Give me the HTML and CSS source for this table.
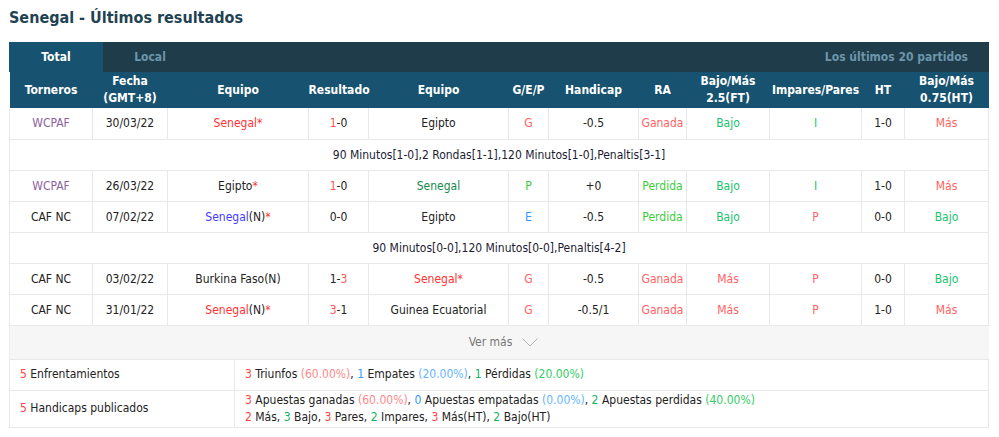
FILE: index.html
```html
<!DOCTYPE html>
<html lang="es">
<head>
<meta charset="utf-8">
<title>Senegal - Últimos resultados</title>
<link rel="stylesheet" href="styles.css">
</head>
<body>
<div class="wrap">
  <h2 class="title">Senegal - Últimos resultados</h2>
  <div class="tabs">
    <div class="tab tab-on">Total</div>
    <div class="tab">Local</div>
    <div class="tab-right">Los últimos 20 partidos</div>
  </div>
  <table class="res">
    <colgroup>
      <col style="width:83px"><col style="width:75px"><col style="width:141px"><col style="width:60px">
      <col style="width:140px"><col style="width:40px"><col style="width:90px"><col style="width:48px">
      <col style="width:83px"><col style="width:92px"><col style="width:43px"><col style="width:84px">
    </colgroup>
    <thead>
      <tr>
        <th>Torneros</th><th>Fecha<br>(GMT+8)</th><th>Equipo</th><th>Resultado</th><th>Equipo</th><th>G/E/P</th><th>Handicap</th><th>RA</th><th>Bajo/Más<br>2.5(FT)</th><th>Impares/Pares</th><th>HT</th><th>Bajo/Más<br>0.75(HT)</th>
      </tr>
    </thead>
    <tbody>
      <tr>
        <td class="lg">WCPAF</td><td>30/03/22</td><td><span class="red">Senegal</span><span class="red">*</span></td><td><span class="sred">1</span>-0</td><td>Egipto</td><td class="salmon">G</td><td>-0.5</td><td class="salmon">Ganada</td><td class="green">Bajo</td><td class="green">I</td><td>1-0</td><td class="salmon">Más</td>
      </tr>
      <tr class="note"><td colspan="12">90 Minutos[1-0],2 Rondas[1-1],120 Minutos[1-0],Penaltis[3-1]</td></tr>
      <tr>
        <td class="lg">WCPAF</td><td>26/03/22</td><td>Egipto<span class="red">*</span></td><td><span class="sred">1</span>-0</td><td class="dgreen">Senegal</td><td class="lgreen">P</td><td>+0</td><td class="lgreen">Perdida</td><td class="green">Bajo</td><td class="green">I</td><td>1-0</td><td class="salmon">Más</td>
      </tr>
      <tr>
        <td>CAF NC</td><td>07/02/22</td><td><span class="blue">Senegal</span>(N)<span class="red">*</span></td><td>0-0</td><td>Egipto</td><td class="sky">E</td><td>-0.5</td><td class="lgreen">Perdida</td><td class="green">Bajo</td><td class="salmon">P</td><td>0-0</td><td class="green">Bajo</td>
      </tr>
      <tr class="note"><td colspan="12">90 Minutos[0-0],120 Minutos[0-0],Penaltis[4-2]</td></tr>
      <tr>
        <td>CAF NC</td><td>03/02/22</td><td>Burkina Faso(N)</td><td>1-<span class="sred">3</span></td><td><span class="red">Senegal*</span></td><td class="salmon">G</td><td>-0.5</td><td class="salmon">Ganada</td><td class="salmon">Más</td><td class="salmon">P</td><td>0-0</td><td class="green">Bajo</td>
      </tr>
      <tr>
        <td>CAF NC</td><td>31/01/22</td><td><span class="red">Senegal</span>(N)<span class="red">*</span></td><td><span class="sred">3</span>-1</td><td>Guinea Ecuatorial</td><td class="salmon">G</td><td>-0.5/1</td><td class="salmon">Ganada</td><td class="salmon">Más</td><td class="salmon">P</td><td>1-0</td><td class="salmon">Más</td>
      </tr>
    </tbody>
  </table>
  <div class="more">Ver más
    <svg class="chev" width="16" height="9" viewBox="0 0 16 9"><path d="M0.5 0.5 L8 8 L15.5 0.5" fill="none" stroke="#b4b4b4" stroke-width="1"/></svg>
  </div>
  <table class="sum">
    <tr>
      <td class="sum-l"><span class="n-red">5</span> Enfrentamientos</td>
      <td><span class="n-red">3</span> Triunfos <span class="p-red">(60.00%)</span>, <span class="n-blue">1</span> Empates <span class="p-blue">(20.00%)</span>, <span class="n-green">1</span> Pérdidas <span class="p-green">(20.00%)</span></td>
    </tr>
    <tr class="sum-2">
      <td class="sum-l"><span class="n-red">5</span> Handicaps publicados</td>
      <td><span class="n-red">3</span> Apuestas ganadas <span class="p-red">(60.00%)</span>, <span class="n-blue">0</span> Apuestas empatadas <span class="p-blue">(0.00%)</span>, <span class="n-green">2</span> Apuestas perdidas <span class="p-green">(40.00%)</span><br><span class="n-red">2</span> Más, <span class="n-green">3</span> Bajo, <span class="n-red">3</span> Pares, <span class="n-green">2</span> Impares, <span class="n-red">3</span> Más(HT), <span class="n-green">2</span> Bajo(HT)</td>
    </tr>
  </table>
</div>
</body>
</html>
```

FILE: styles.css
```css
* { box-sizing: border-box; }
html, body { margin: 0; padding: 0; background: #fff; }
body {
  font-family: "DejaVu Sans Condensed", "Liberation Sans", Arial, sans-serif;
  font-size: 12px;
  color: #222;
}
.wrap { padding: 0 10px 0 9px; width: 999px; }
.title {
  margin: 0;
  padding-top: 6px;
  height: 42px;
  font-size: 16px;
  font-weight: bold;
  color: #1f4353;
  line-height: 24px;
}
.tabs {
  display: flex;
  align-items: center;
  height: 30px;
  background: #1e3c4a;
  width: 980px;
}
.tab {
  width: 94px;
  height: 30px;
  line-height: 30px;
  text-align: center;
  font-weight: bold;
  color: #6d95ab;
}
.tab-on { background: #175370; color: #fff; }
.tab-right {
  margin-left: auto;
  padding-right: 21px;
  font-weight: bold;
  color: #6d95ab;
}
.res {
  width: 980px;
  border-collapse: collapse;
  table-layout: fixed;
}
.res th {
  background: #175370;
  color: #fff;
  font-weight: bold;
  height: 36px;
  line-height: 17px;
  padding: 0;
  text-align: center;
  white-space: nowrap;
}
.res td {
  height: 31px;
  padding: 0;
  text-align: center;
  border: 1px solid #e8e8e8;
  white-space: nowrap;
}
.res tbody tr:first-child td { border-top: 0; height: 31px; }
.res .note td { color: #1c1c34; }
.lg { color: #8e5fa0; }
.red { color: #ff3333; }
.sred { color: #ff5555; }
.salmon { color: #ff6262; }
.green { color: #17c46b; }
.lgreen { color: #3ccc3c; }
.dgreen { color: #178a4a; }
.blue { color: #3f3cff; }
.sky { color: #3399ff; }
.more {
  width: 980px;
  height: 33px;
  background: #f6f6f6;
  display: flex;
  align-items: center;
  justify-content: center;
  gap: 10px;
  padding-left: 8px;
  color: #777;
  border-left: 1px solid #ececec;
}
.chev { margin-top: 0; }
.sum {
  width: 980px;
  border-collapse: collapse;
  table-layout: fixed;
}
.sum td {
  border: 1px solid #e8e8e8;
  padding: 0 0 0 10px;
  height: 31px;
  line-height: 17px;
  text-align: left;
}
.sum .sum-l { width: 225px; }
.sum-2 td { height: 37px; }
.n-red { color: #ff4444; }
.p-red { color: #ff8a8a; }
.n-blue { color: #3399ff; }
.p-blue { color: #66b5ff; }
.n-green { color: #13b35c; }
.p-green { color: #33cc66; }
```
